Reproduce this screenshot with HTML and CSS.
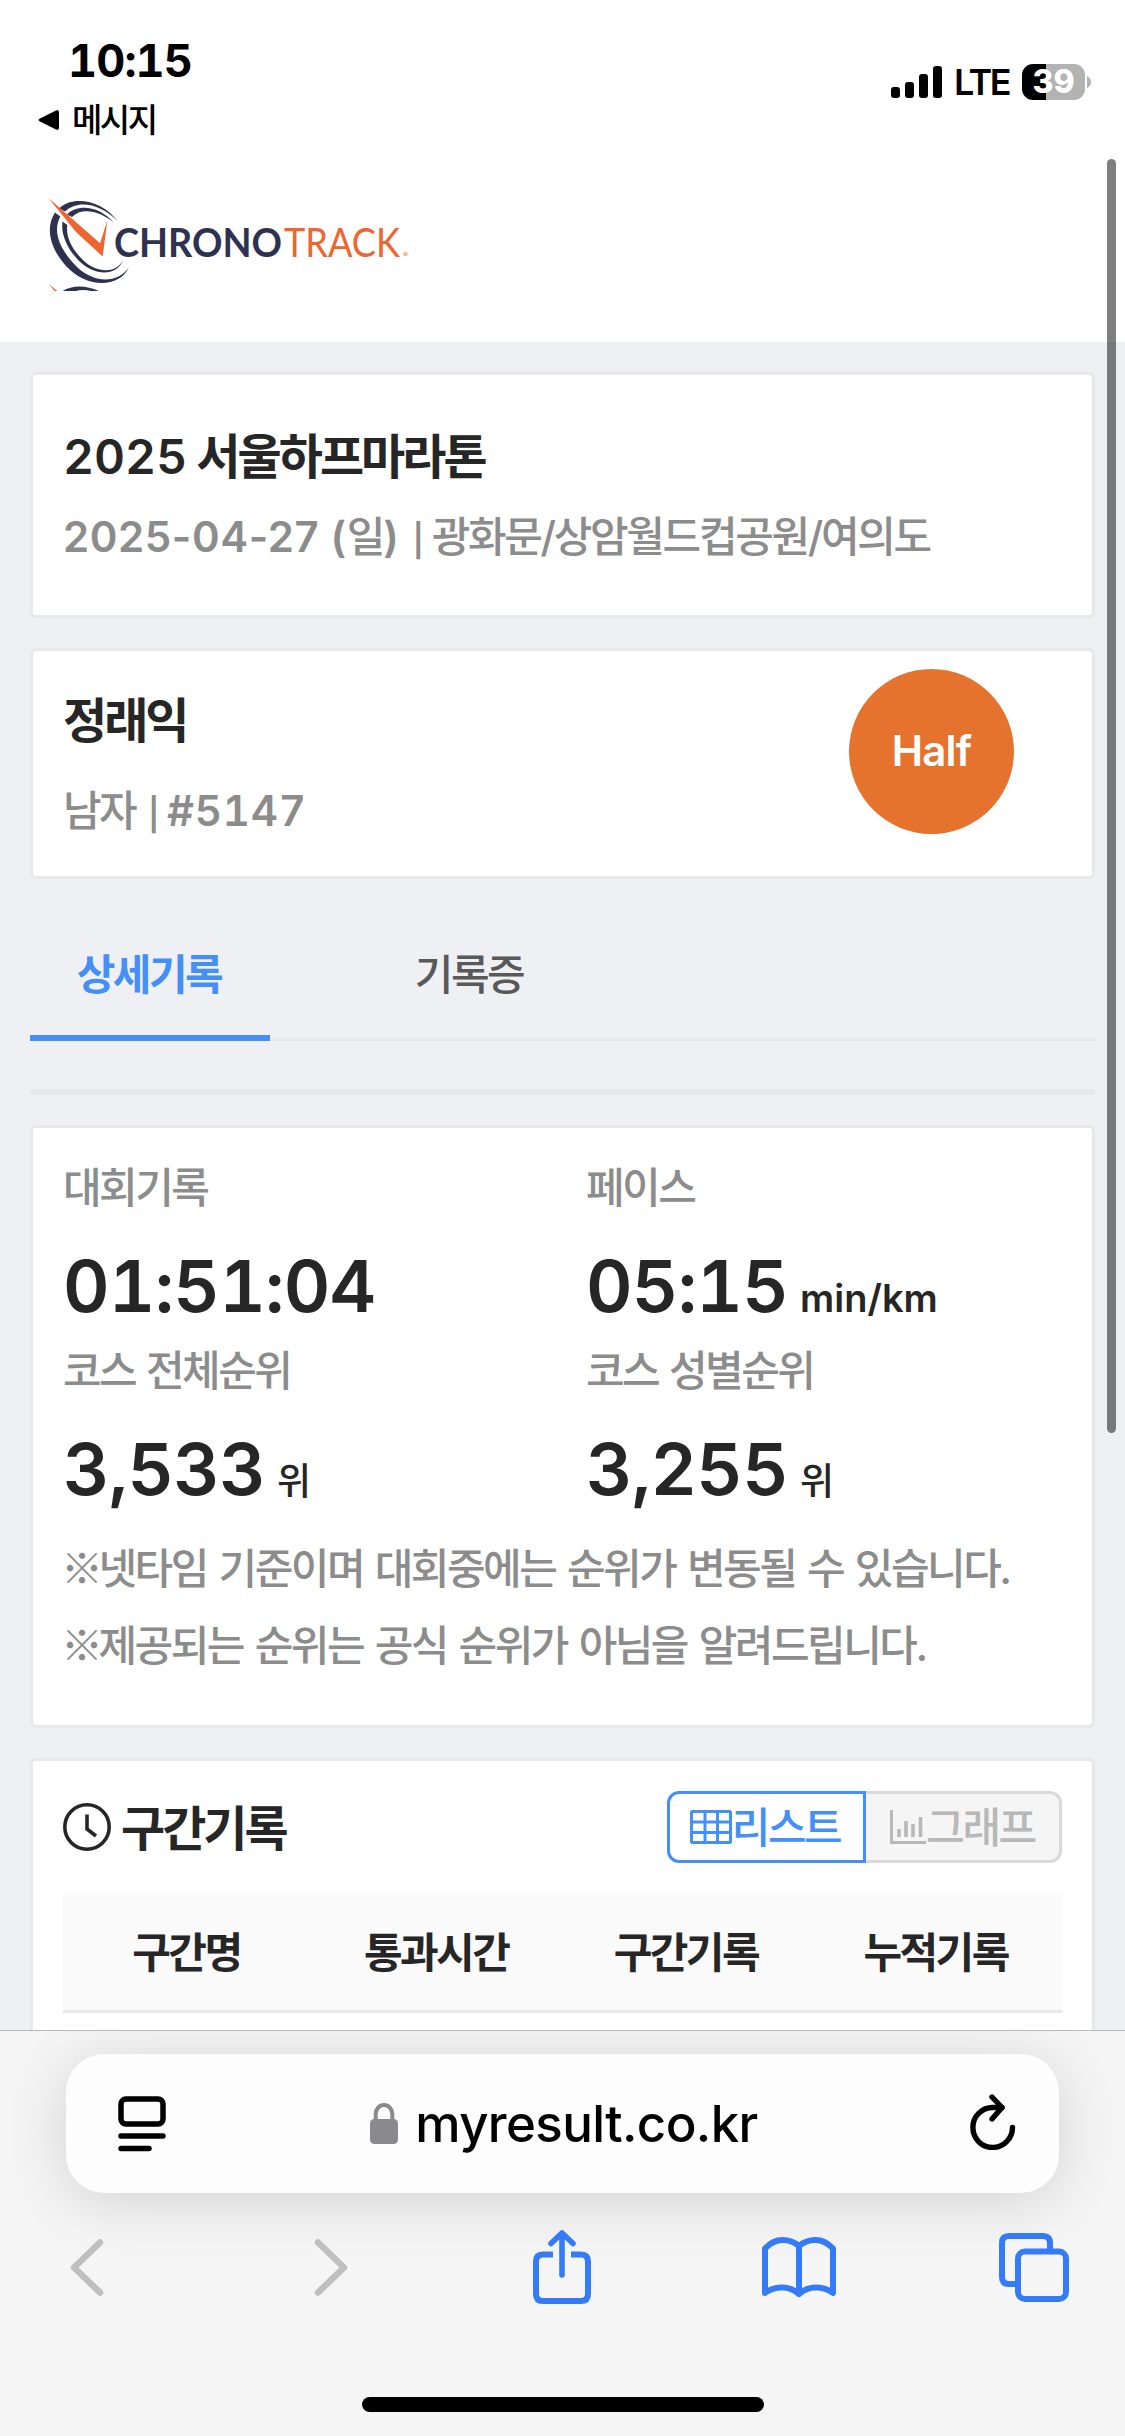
FILE: index.html
```html
<!DOCTYPE html>
<html lang="ko">
    <head>
        <meta charset="UTF-8" />
        <meta name="viewport" content="width=device-width, initial-scale=1.0" />
        <title>2025 서울하프마라톤</title>
        <link rel="stylesheet" href="styles.css">
    </head>
    <body>
        <div class="status">
            <div class="status-left">
                <div class="clock">10:15</div>
                <div class="back-app">
                    <svg width="22" height="22" viewBox="0 0 22 22"><path d="M2 9.500 18.500 1.300Q21 .5 21 3.500v15Q21 21.500 18.500 20.700L2 12.500Q-1 11 2 9.500z" /></svg>
                    <span>메시지</span>
                </div>
            </div>
            <div class="status-right">
                <svg width="51" height="32" viewBox="0 0 51 32">
                    <rect x="0" y="21" width="9" height="11" rx="3" />
                    <rect x="14" y="16" width="9" height="16" rx="3" />
                    <rect x="28" y="8" width="9" height="24" rx="3" />
                    <rect x="42" y="0" width="9" height="32" rx="3" />
                </svg>
                <span class="network">LTE</span>
                <span class="battery">39</span>
                <svg class="nub" width="4" height="12" viewBox="0 0 4 12"><path d="M0 0q4 2 4 6t-4 6z" /></svg>
            </div>
        </div>

        <header>
            <svg class="logo" width="420" height="93" viewBox="48 198 420 93">
                <g id="mark">
                    <g fill="#2e3250">
                        <path d="M55 212.500C45 228 50 248 66 266c21 23 53 22 63 1.500C117 284 94 283 77 267 60 250 52 232 60.300 216.500z" />
                        <path d="M59 208.500c14-14 44-8 59 13C101 204 78 199 65.300 211.500z" />
                        <path d="M62.500 221.500c-2 14 6 28 16 39 16 16 38 16 44.500 0-8 14-27 12-39.500 0-11-10-18-24-16.200-35.500z" />
                        <path d="M67 214.500c10-11 33-9 47 8.500C100 211 82 207 72 217z" />
                    </g>
                    <path fill="#f0652f" d="M48.500 198 100 243.300l7.300-22.800-4.600 36L76 232z" />
                </g>
                <use href="#mark" y="85.500" />
                <text class="logo-chrono" x="114" y="256.500" textLength="168" lengthAdjust="spacingAndGlyphs">CHRONO</text>
                <text class="logo-track" x="284" y="256.500" textLength="116" lengthAdjust="spacingAndGlyphs">TRACK</text>
                <circle cx="405.500" cy="254" r="2.200" fill="#f9b78a" />
            </svg>
        </header>

        <main>
            <section class="card race">
                <h1><span class="num">2025</span> 서울하프마라톤</h1>
                <p><span class="date">2025-04-27 (</span>일<span class="date">) </span><span class="bar">|</span>광화문/상암월드컵공원/여의도</p>
            </section>

            <section class="card runner">
                <div>
                    <h2>정래익</h2>
                    <p>남자 <span class="bar">|</span><span class="num bib">#5147</span></p>
                </div>
                <div class="course">Half</div>
            </section>

            <nav class="tabs">
                <a class="active">상세기록</a>
                <a>기록증</a>
            </nav>
            <div class="divider"></div>

            <section class="card result">
                <dl>
                    <div>
                        <dt>대회기록</dt>
                        <dd>01:51:04</dd>
                    </div>
                    <div>
                        <dt>페이스</dt>
                        <dd>05:15<small class="pace">min/km</small></dd>
                    </div>
                    <div>
                        <dt>코스 전체순위</dt>
                        <dd>3,533<small>위</small></dd>
                    </div>
                    <div>
                        <dt>코스 성별순위</dt>
                        <dd>3,255<small>위</small></dd>
                    </div>
                </dl>
                <p><span class="mark">※</span>넷타임 기준이며 대회중에는 순위가 변동될 수 있습니다.</p>
                <p><span class="mark">※</span>제공되는 순위는 공식 순위가 아님을 알려드립니다.</p>
            </section>

            <section class="card splits">
                <div class="splits-head">
                    <svg width="48" height="48" viewBox="0 0 48 48" fill="none" stroke="#262626" stroke-width="3.600">
                        <circle cx="24" cy="24" r="22.200" />
                        <path d="M24 11.500V26l9 7" />
                    </svg>
                    <h3>구간기록</h3>
                    <div class="toggle">
                        <button class="on">
                            <svg width="42" height="34" viewBox="0 0 42 34" fill="none" stroke="currentColor" stroke-width="3">
                                <rect x="1.500" y="1.500" width="39" height="31" rx="1" />
                                <path d="M1 12h40M1 22.500h40M15 1v32M27.500 1v32" />
                            </svg><span>리스트</span>
                        </button>
                        <button>
                            <svg width="36" height="34" viewBox="0 0 36 34" fill="none" stroke="currentColor" stroke-width="3">
                                <path d="M1.500 0v32.500H36" />
                                <path d="M9 27v-8M16 27V11M23 27V14M30.500 27V7" stroke-width="3.600" />
                            </svg><span>그래프</span>
                        </button>
                    </div>
                </div>
                <div class="splits-row">
                    <span>구간명</span>
                    <span>통과시간</span>
                    <span>구간기록</span>
                    <span>누적기록</span>
                </div>
            </section>
        </main>

        <footer>
            <div class="address">
                <svg width="48" height="56" viewBox="0 0 48 56" fill="none" stroke="#000" stroke-width="5.500" stroke-linecap="round">
                    <rect x="3" y="3" width="42" height="25" rx="5" />
                    <path d="M3 40h42M3 52.500h28" />
                </svg>
                <div class="url">
                    <svg width="28" height="41" viewBox="0 0 28 41">
                        <rect x="0" y="16" width="28" height="25" rx="4.500" fill="#8a8a8e" />
                        <path d="M5.700 17V11a8.300 9 0 0 1 16.600 0v6" fill="none" stroke="#8a8a8e" stroke-width="4" />
                    </svg>
                    <span>myresult.co.kr</span>
                </div>
                <svg class="reload" width="46" height="56" viewBox="0 0 46 56" fill="none" stroke="#000" stroke-width="5.400" stroke-linecap="round" stroke-linejoin="round">
                    <path d="M42.500 33.500A19.800 20 0 1 1 23 13.500H32" />
                    <path d="M22 3 32 13.500 22 25" />
                </svg>
            </div>
            <div class="toolbar">
                <svg width="34" height="57" viewBox="0 0 34 57" fill="none" stroke="#bfbfbf" stroke-width="6.500" stroke-linecap="round" stroke-linejoin="round"><path d="M30 3.500 4 28.500l26 25" /></svg>
                <svg width="34" height="57" viewBox="0 0 34 57" fill="none" stroke="#bfbfbf" stroke-width="6.500" stroke-linecap="round" stroke-linejoin="round"><path d="M4 3.500l26 25-26 25" /></svg>
                <svg width="58" height="74" viewBox="0 0 58 74" fill="none" stroke="#357af6" stroke-width="6" stroke-linecap="round" stroke-linejoin="round">
                    <path d="M20 24.500h-10Q3 24.500 3 31.500v32.500Q3 71 10 71h38q7 0 7-7V31.500q0-7-7-7h-10" stroke-linecap="butt" />
                    <path d="M29 45V3M18 13.500 29 3l11 10.500" stroke-width="5.600" />
                </svg>
                <svg width="74" height="61" viewBox="0 0 74 61" fill="none" stroke="#357af6" stroke-width="6" stroke-linecap="round" stroke-linejoin="round">
                    <path d="M37 9Q30 3 20.500 3T3 11.500V56Q10 50.500 20 50.500T37 57Q44 50.500 54 50.500T71 56V11.500Q63 3 53.500 3T37 9zV57" />
                </svg>
                <svg width="70" height="69" viewBox="0 0 70 69" fill="none" stroke="#357af6" stroke-width="6">
                    <path d="M17 51h-7q-7 0-7-7V10q0-7 7-7h34q7 0 7 7v6" />
                    <rect x="19" y="18.500" width="48" height="47.500" rx="7" />
                </svg>
            </div>
            <div class="home-bar"></div>
        </footer>
        <div class="scrollbar"></div>
    </body>
</html>
```

FILE: styles.css
```css
* {
    box-sizing: border-box;
    margin: 0;
    padding: 0;
}
body {
    display: flex;
    flex-direction: column;
    width: 1125px;
    height: 2436px;
    overflow: hidden;
    position: relative;
    background-color: #eff0f4;
    color: #262626;
    font-family: Inter, 'Noto Sans CJK KR', sans-serif;
    font-size: 42px;
    font-weight: 500;
    letter-spacing: -0.06em;
}
svg {
    display: block;
    flex: none;
}

.num {
    font-weight: 600;
    font-variant-numeric: tabular-nums;
    letter-spacing: 0;
}
.date {
    font-weight: 600;
    letter-spacing: 0.014em;
}
.bar {
    margin: 0 10px 0 2px;
    font-size: 32px;
    font-weight: 600;
    line-height: 1;
}
.bib {
    letter-spacing: 0.02em;
}

/* status bar */
.status {
    display: flex;
    justify-content: space-between;
    height: 159px;
    background-color: white;
    color: black;
}
.status-left {
    padding: 30px 0 0 38px;
}
.clock {
    padding-left: 30px;
    font-size: 45px;
    font-weight: 700;
    font-variant-numeric: tabular-nums;
    line-height: 61px;
    letter-spacing: -0.02em;
}
.back-app {
    display: flex;
    align-items: center;
    gap: 12px;
    font-size: 33px;
    line-height: 58px;
}
.status-right {
    display: flex;
    align-items: center;
    height: 36px;
    margin: 64px 34px 0 0;
    letter-spacing: 0;
}
.network {
    margin: 0 13px 0 12px;
    font-size: 36px;
    font-weight: 600;
    letter-spacing: -0.07em;
}
.battery {
    width: 63px;
    height: 36px;
    border-radius: 11px;
    background: linear-gradient(to right, black 24px, #b3b3b3 24px);
    color: white;
    font-size: 32px;
    font-weight: 800;
    line-height: 36px;
    text-align: center;
}
.nub {
    margin-left: 2px;
    fill: #b3b3b3;
}

header {
    height: 183px;
    padding: 39px 48px;
    background-color: white;
}
.logo-chrono,
.logo-track {
    font-family: Lato, sans-serif;
    font-size: 40px;
    letter-spacing: 0;
}
.logo-chrono {
    font-weight: 700;
    fill: #2e3250;
}
.logo-track {
    font-weight: 400;
    fill: #f0652f;
}

main {
    flex: 1;
    min-height: 0;
    overflow: hidden;
    padding: 30px 30px 0;
}
.card {
    border: 3px solid #e8e8e8;
    border-radius: 6px;
    background-color: white;
    padding: 0 30px;
}
.card p {
    color: #8c8c8c;
    white-space: nowrap;
}
h1,
h2,
h3 {
    font-size: 48px;
    font-weight: 600;
    letter-spacing: -0.062em;
}

.race {
    height: 246px;
    padding-top: 42px;
    line-height: 80px;
}
.race p {
    letter-spacing: -0.056em;
}
.runner {
    display: flex;
    justify-content: space-between;
    height: 231px;
    margin-top: 30px;
    padding: 18px 78px 0 30px;
}
.runner h2 {
    padding-top: 12px;
    line-height: 80px;
}
.runner p {
    margin-top: 10px;
    line-height: 80px;
    word-spacing: 2px;
}
.course {
    width: 165px;
    height: 165px;
    border-radius: 50%;
    background-color: #e5732d;
    color: white;
    font-weight: 600;
    line-height: 163px;
    text-align: center;
    letter-spacing: -0.02em;
}

.tabs {
    display: flex;
    gap: 80px;
    height: 162px;
    border-bottom: 3px solid #e8e8e8;
}
.tabs a {
    width: 240px;
    height: 162px;
    padding: 66px 2px 0 0;
    color: #595959;
    line-height: 60px;
    text-align: center;
}
.tabs .active {
    border-bottom: 6px solid #448ff8;
    color: #448ff8;
    font-weight: 600;
}
.divider {
    height: 6px;
    margin: 48px 0 30px;
    border-radius: 3px;
    background-color: #e8e8e8;
}

.result {
    height: 603px;
    padding-top: 30px;
}
.result dl {
    display: grid;
    grid-template-columns: 523px 1fr;
    margin-bottom: 6px;
}
.result dt {
    color: #8c8c8c;
    line-height: 60px;
    word-spacing: 2px;
}
.result dd {
    height: 123px;
    padding-top: 12px;
    font-size: 72px;
    font-weight: 600;
    font-variant-numeric: tabular-nums;
    line-height: 111px;
    letter-spacing: -0.01em;
}
.result small {
    margin-left: 12px;
    font-size: 37px;
    font-weight: 500;
    line-height: 1;
}
.result .pace {
    font-size: 38px;
    font-weight: 600;
    letter-spacing: 0;
}
.result p {
    line-height: 77px;
    word-spacing: 3px;
}
.mark {
    margin: 0 -2px 0 -2px;
    font-family: 'Noto Sans CJK KR', sans-serif;
    line-height: 1;
}

.splits {
    height: 400px;
    margin-top: 30px;
    padding-top: 30px;
}
.splits-head {
    display: flex;
    align-items: center;
    height: 72px;
}
.splits-head h3 {
    margin: 0 auto 0 10px;
    padding-bottom: 5px;
}
.toggle {
    display: flex;
}
.toggle button {
    display: flex;
    align-items: center;
    justify-content: center;
    width: 196px;
    height: 72px;
    border: 3px solid #d9d9d9;
    border-left: 0;
    border-radius: 0 12px 12px 0;
    background-color: #f5f5f5;
    color: #b8b8b8;
    font: inherit;
    letter-spacing: inherit;
}
.toggle span {
    padding-bottom: 6px;
}
.toggle .on {
    width: 199px;
    padding-right: 3px;
    border: 3px solid #448ff8;
    border-radius: 12px 0 0 12px;
    background-color: white;
    color: #448ff8;
}
.splits-row {
    display: grid;
    grid-template-columns: repeat(4, 1fr);
    height: 120px;
    margin-top: 30px;
    border-bottom: 3px solid #e8e8e8;
    background-color: #fafafa;
    font-weight: 600;
    line-height: 120px;
    text-align: center;
}
.splits-row span {
    padding-right: 3px;
}

/* browser bottom bar */
footer {
    height: 406px;
    padding: 23px 66px 0;
    border-top: 1px solid #b9b9bd;
    background-color: #f5f5f5;
    letter-spacing: 0;
    overflow: hidden;
}
.address {
    display: flex;
    align-items: center;
    justify-content: space-between;
    height: 139px;
    padding: 0 43px 0 52px;
    border-radius: 38px;
    background-color: #fdfdfd;
    box-shadow: 0 8px 60px rgba(0, 0, 0, 0.14);
}
.address .reload {
    margin-bottom: 4px;
}
.url {
    display: flex;
    align-items: center;
    gap: 17px;
    padding-right: 8px;
    color: black;
    font-size: 51px;
    letter-spacing: -0.012em;
}
.toolbar {
    display: grid;
    grid-template-columns: 244px 219px 229px 237px 70px;
    align-items: center;
    height: 74px;
    margin: 37px 0 0 4px;
}
.home-bar {
    width: 402px;
    height: 15px;
    margin: 93px auto 0;
    border-radius: 8px;
    background-color: black;
}
.scrollbar {
    position: absolute;
    top: 159px;
    left: 1107px;
    width: 9px;
    height: 1274px;
    border-radius: 5px;
    background-color: rgba(0, 0, 0, 0.5);
}
```
